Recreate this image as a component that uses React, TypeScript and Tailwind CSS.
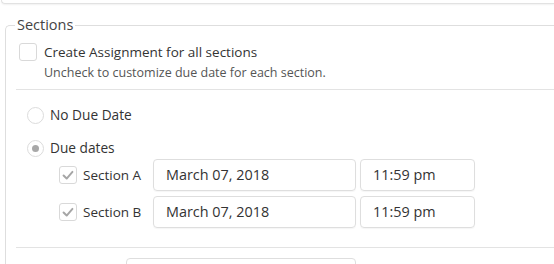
import React from 'react';

const Check = () => (
  <svg viewBox="0 0 18 18" className="w-[18px] h-[18px]">
    <path d="M4 9.5 L7.5 13 L14 5.5" fill="none" stroke="#a6a6a6" strokeWidth="2.2" strokeLinecap="round" strokeLinejoin="round" />
  </svg>
);

const Checkbox = ({ checked = false }: { checked?: boolean }) => (
  <span className="w-[18px] h-[18px] rounded-[3px] border border-[#d9d9d9] bg-white flex items-center justify-center shrink-0">
    {checked && <Check />}
  </span>
);

const Radio = ({ checked = false }: { checked?: boolean }) => (
  <span className="w-[17px] h-[17px] rounded-full border border-[#dcdcdc] bg-white flex items-center justify-center shrink-0">
    {checked && <span className="w-[7px] h-[7px] rounded-full bg-[#a8a8a8]" />}
  </span>
);

const SECTIONS = ['Section A', 'Section B'];

const App: React.FC = () => {
  return (
    <div className="w-[554px] h-[264px] overflow-hidden bg-white text-[#333] font-['Open_Sans',sans-serif]">
      {/* previous panel edge */}
      <div className="h-[4px] ml-[1px] border-l border-b border-[#e2e2e2] rounded-bl-[4px] shadow-[0_1px_2px_rgba(0,0,0,0.06)]" />

      <fieldset className="ml-[5px] mt-[11px] border-l border-t border-[#dedede] rounded-tl-[5px] pl-[9px] pb-[20px]">
        <legend className="px-[2px] text-[14.5px] leading-[20px] text-[#444]">Sections</legend>

        <div className="pt-[7px] pl-[4px]">
          <label className="flex items-center gap-[7px] h-[20px]">
            <Checkbox />
            <span className="text-[13.5px]">Create Assignment for all sections</span>
          </label>
          <p className="ml-[25px] mt-[2px] text-[12.5px] leading-[17px] text-[#555]">Uncheck to customize due date for each section.</p>
        </div>

        <div className="ml-[1px] mt-[8px] border-t border-[#e3e3e3]" />

        <div className="pl-[12px] pt-[15px] flex flex-col">
          <label className="flex items-center gap-[6px] h-[20px]">
            <Radio />
            <span className="text-[13.7px]">No Due Date</span>
          </label>
          <label className="flex items-center gap-[6px] h-[20px] mt-[13px]">
            <Radio checked />
            <span className="text-[13.7px]">Due dates</span>
          </label>

          <div className="flex flex-col gap-[5px] mt-[1px] pl-[32px]">
            {SECTIONS.map((s) => (
              <div key={s} className="flex items-center h-[32px]">
                <Checkbox checked />
                <span className="ml-[6px] w-[70px] text-[13.5px]">{s}</span>
                <div className="w-[203px] h-[32px] rounded-[4px] border border-[#dedede] shadow-[0_1px_1px_rgba(0,0,0,0.04)] flex items-center pl-[12px] text-[14.4px]">
                  March 07, 2018
                </div>
                <div className="ml-[4px] w-[115px] h-[32px] rounded-[4px] border border-[#dedede] shadow-[0_1px_1px_rgba(0,0,0,0.04)] flex items-center pl-[12px] text-[14.4px]">
                  11:59 pm
                </div>
              </div>
            ))}
          </div>
        </div>

        <div className="ml-[1px] mt-[19px] border-t border-[#e3e3e3]" />

        <div className="ml-[111px] mt-[10px] w-[230px] h-[32px] rounded-[4px] border border-[#dedede]" />
      </fieldset>
    </div>
  );
};

export default App;
